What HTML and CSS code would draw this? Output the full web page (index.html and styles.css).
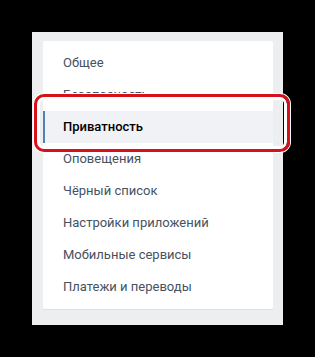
FILE: index.html
```html
<html>
  <head>
    <meta charset="utf-8" />
    <title>Настройки</title>
    <link rel="stylesheet" href="styles.css">
  </head>
  <body>
    <div class="panel">
      <ul class="menu">
        <li><a href="#">Общее</a></li>
        <li><a href="#">Безопасность</a></li>
        <li class="selected"><a href="#">Приватность</a></li>
        <li><a href="#">Оповещения</a></li>
        <li><a href="#">Чёрный список</a></li>
        <li><a href="#">Настройки приложений</a></li>
        <li><a href="#">Мобильные сервисы</a></li>
        <li><a href="#">Платежи и переводы</a></li>
      </ul>
      <!-- красная рамка поверх пункта -->
      <div class="highlight"></div>
    </div>
  </body>
</html>
```
FILE: styles.css
```css
body {
  margin: 0;
  padding: 32px 0 0 32px;
  background: #000;
  font-family: Roboto, "Noto Sans", sans-serif;
  font-size: 13px;
}
.panel {
  position: relative;
  width: 251px;
  height: 293px;
  box-sizing: border-box;
  padding: 9px 10px 0 11px;
  background: #edeef0;
}
.menu {
  margin: 0;
  padding: 6px 0;
  list-style: none;
  background: #fff;
  border-radius: 2px;
  box-shadow: 0 1px 0 0 #dcdee3;
}
.menu li {
  height: 32px;
  line-height: 32px;
  padding-left: 18px;
  border-left: 2px solid transparent;
}
.menu li a {
  text-decoration: none;
  color: #45525f;
}
.menu li.selected {
  background: #f0f2f5;
  border-left-color: #5181b8;
}
.menu li.selected a {
  color: #000;
  font-weight: 500;
}
.highlight {
  position: absolute;
  left: 2px;
  top: 62px;
  width: 256px;
  height: 58px;
  box-sizing: border-box;
  border: 3px solid #d7111c;
  border-radius: 10px;
  box-shadow: 0 0 0 1px #fff, inset 0 0 0 3px #fff;
}
```
